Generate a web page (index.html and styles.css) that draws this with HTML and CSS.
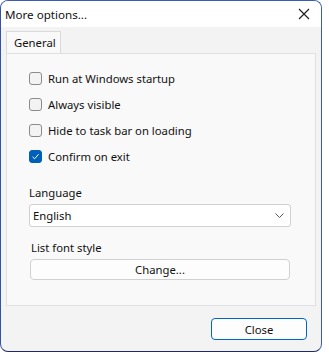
FILE: index.html
```html
<!DOCTYPE html>
<html>
<head>
<meta charset="utf-8">
<link rel="stylesheet" href="styles.css">
</head>
<body>
<div class="window">
  <div class="titlebar">
    <span class="title">More options...</span>
    <svg class="close-x" width="12" height="12" viewBox="0 0 12 12"><path d="M1 1 L11 11 M11 1 L1 11" stroke="#1a1a1a" stroke-width="1.1" fill="none"/></svg>
  </div>
  <div class="body">
    <div class="tabs">
      <div class="tab">General</div>
    </div>
    <div class="panel">
      <div class="checks">
        <label class="check"><span class="box"></span><span>Run at Windows startup</span></label>
        <label class="check"><span class="box"></span><span>Always visible</span></label>
        <label class="check"><span class="box"></span><span>Hide to task bar on loading</span></label>
        <label class="check"><span class="box checked"><svg width="9" height="9" viewBox="0 0 9 9"><path d="M1.5 4.8 L3.6 6.8 L7.6 2.2" stroke="#fff" stroke-width="1" fill="none"/></svg></span><span>Confirm on exit</span></label>
      </div>
      <div class="field">
        <div class="label">Language</div>
        <div class="select"><span>English</span><svg width="9" height="5" viewBox="0 0 9 5"><path d="M0.5 0.5 L4.5 4.5 L8.5 0.5" stroke="#555" stroke-width="1" fill="none"/></svg></div>
      </div>
      <div class="field font-field">
        <div class="label">List font style</div>
        <div class="button wide">Change...</div>
      </div>
    </div>
    <div class="footer">
      <div class="button primary">Close</div>
    </div>
  </div>
</div>
</body>
</html>
```
FILE: styles.css
```css
html, body {
  margin: 0;
  padding: 0;
  background: #ffffff;
}
body {
  font-family: "Noto Sans", "Open Sans", sans-serif;
  font-size: 11.3px;
  color: #111111;
}
.window {
  width: 320px;
  height: 350px;
  border: 1px solid #3b5cb4;
  border-bottom-color: #1e2a66;
  border-left-color: #3450a8;
  border-radius: 8px;
  background: #f3f3f3;
  overflow: hidden;
  display: flex;
  flex-direction: column;
}
.titlebar {
  height: 26px;
  background: #ffffff;
  display: flex;
  align-items: center;
  justify-content: space-between;
  padding: 0 11px 0 4px;
}
.title {
  font-size: 11.6px;
}
.close-x {
  display: block;
}
.body {
  flex: 1;
  display: flex;
  flex-direction: column;
  padding: 4px 5px 0 5px;
}
.tabs {
  display: flex;
  height: 22px;
}
.tab {
  width: 55px;
  border: 1px solid #dadada;
  border-bottom: none;
  background: #f9f9f9;
  padding-left: 7px;
  line-height: 21px;
  margin-bottom: -1px;
  position: relative;
  z-index: 1;
  height: 22px;
  box-sizing: border-box;
}
.panel {
  height: 253px;
  border: 1px solid #e0e0e0;
  background: #f9f9f9;
  box-sizing: border-box;
  padding: 16px 0 0 22px;
  width: 310px;
}
.checks {
  display: flex;
  flex-direction: column;
  gap: 10px;
}
.check {
  display: flex;
  align-items: center;
  gap: 6px;
  height: 16px;
}
.box {
  width: 11px;
  height: 11px;
  border: 1px solid #8b8b8b;
  border-radius: 3px;
  background: #f3f3f3;
  display: flex;
  align-items: center;
  justify-content: center;
}
.box.checked {
  background: #005fb8;
  border-color: #005fb8;
}
.field {
  margin-top: 21px;
}
.label {
  height: 16px;
  line-height: 16px;
  margin-bottom: 3px;
}
.select {
  width: 262px;
  height: 23px;
  box-sizing: border-box;
  border: 1px solid #d0d0d0;
  border-radius: 3px;
  background: #ffffff;
  display: flex;
  align-items: center;
  justify-content: space-between;
  padding: 0 6px 0 3px;
}
.select svg { display: block; }
.font-field {
  margin-top: 13px;
}
.font-field .label {
  padding-left: 2px;
  margin-bottom: 3px;
}
.button {
  box-sizing: border-box;
  border: 1px solid #d0d0d0;
  border-radius: 4px;
  background: #fdfdfd;
  display: flex;
  align-items: center;
  justify-content: center;
}
.button.wide {
  width: 260px;
  height: 21px;
  margin-left: 1px;
}
.footer {
  flex: 1;
  display: flex;
  justify-content: flex-end;
  align-items: flex-start;
  padding: 12px 9px 0 0;
}
.button.primary {
  width: 96px;
  height: 22px;
  border: 1px solid #0067c0;
  background: #fdfdfd;
}
```
